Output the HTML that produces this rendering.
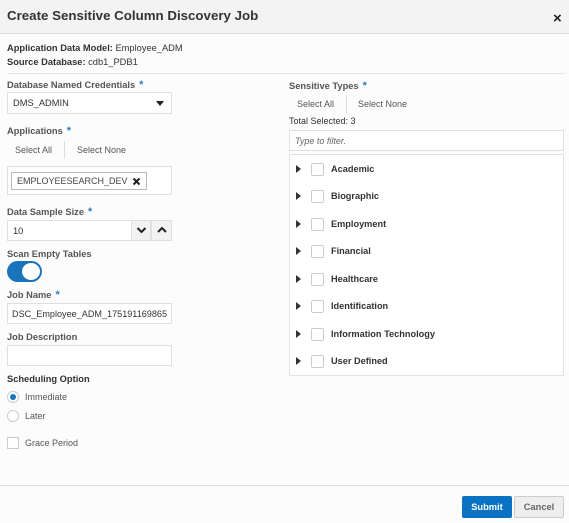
<!DOCTYPE html>
<html><head><style>
*{box-sizing:border-box;margin:0;padding:0}
body{width:569px;height:523px;background:#fcfcfc;font-family:"Liberation Sans",sans-serif;font-size:9.3px;color:#333;position:relative;overflow:hidden}
.a{position:absolute}
.lbl{position:absolute;font-size:9.3px;font-weight:bold;color:#555;line-height:12px}
.st{color:#2d7fc1;font-weight:bold;margin-left:4px;vertical-align:top;font-size:11px}
.inp{position:absolute;background:#fff;border:1px solid #dfdfdf;font-size:9.3px;color:#333;padding-left:5px;display:flex;align-items:center;white-space:nowrap;overflow:hidden}
.t{position:absolute;font-size:9px;color:#555;line-height:12px}
.row{position:absolute;left:296px;height:14px;display:flex;align-items:center}
.tri{width:0;height:0;border-left:5px solid #333;border-top:4px solid transparent;border-bottom:4px solid transparent;margin-right:10px}
.cb{width:13px;height:13px;border:1px solid #ccc;border-radius:2px;background:#fff;margin-right:7px}
.row span{font-weight:bold;font-size:9.2px;color:#333}
</style></head><body>
<div class="a" style="left:0;top:0;width:569px;height:34px;background:#f3f3f3;border-bottom:1px solid #e0e0e0"></div>
<div class="a" style="left:7px;top:8px;font-size:13.3px;font-weight:bold;color:#333">Create Sensitive Column Discovery Job</div>
<div class="a" style="left:553px;top:10px;font-size:15px;font-weight:bold;color:#222">×</div>

<div class="t" style="left:7px;top:42px;color:#333;font-size:9.3px"><b>Application Data Model:</b> Employee_ADM</div>
<div class="t" style="left:7px;top:56px;color:#333;font-size:9.3px"><b>Source Database:</b> cdb1_PDB1</div>
<div class="a" style="left:7px;top:73px;width:558px;height:1px;background:#e5e5e5"></div>

<div class="lbl" style="left:7px;top:79px">Database Named Credentials<span class="st">*</span></div>
<div class="inp" style="left:7px;top:92px;width:165px;height:22px">DMS_ADMIN</div>
<div class="a" style="left:156px;top:101px;border-top:5px solid #222;border-left:4px solid transparent;border-right:4px solid transparent"></div>

<div class="lbl" style="left:7px;top:125px">Applications<span class="st">*</span></div>
<div class="t" style="left:15px;top:144px">Select All</div>
<div class="a" style="left:64px;top:141px;width:1px;height:18px;background:#ddd"></div>
<div class="t" style="left:77px;top:144px">Select None</div>
<div class="inp" style="left:7px;top:166px;width:165px;height:29px;padding-left:0"></div>
<div class="inp" style="left:11px;top:172px;width:136px;height:18px;border-color:#bbb;color:#444;font-size:9px">EMPLOYEESEARCH_DEV</div>
<svg class="a" style="left:132px;top:177px" width="9" height="9"><path d="M1.5 1.5l6 6M7.5 1.5l-6 6" stroke="#222" stroke-width="2"/></svg>

<div class="lbl" style="left:7px;top:206px">Data Sample Size<span class="st">*</span></div>
<div class="inp" style="left:7px;top:220px;width:165px;height:21px">10</div>
<div class="a" style="left:131px;top:220px;width:20px;height:21px;border:1px solid #dfdfdf;background:#f2f2f2"></div>
<div class="a" style="left:151px;top:220px;width:21px;height:21px;border:1px solid #dfdfdf;background:#f2f2f2"></div>
<svg class="a" style="left:136px;top:225px" width="40" height="10"><path d="M1.5 3l4 4 4-4" stroke="#222" stroke-width="2" fill="none"/><path d="M22 7l4-4 4 4" stroke="#222" stroke-width="2" fill="none"/></svg>

<div class="lbl" style="left:7px;top:248px">Scan Empty Tables</div>
<div class="a" style="left:7px;top:261px;width:35px;height:21px;border-radius:11px;background:#1a74bc"></div>
<div class="a" style="left:22px;top:263px;width:18px;height:17px;border-radius:50%;background:#fff"></div>

<div class="lbl" style="left:7px;top:289px">Job Name<span class="st">*</span></div>
<div class="inp" style="left:7px;top:303px;width:165px;height:21px;font-size:9.1px;padding-left:4px">DSC_Employee_ADM_175191169865</div>

<div class="lbl" style="left:7px;top:331px">Job Description</div>
<div class="inp" style="left:7px;top:345px;width:165px;height:21px"></div>

<div class="lbl" style="left:7px;top:373px;color:#333">Scheduling Option</div>
<div class="a" style="left:7px;top:391px;width:12px;height:12px;border-radius:50%;border:1px solid #ccc;background:#fff"></div>
<div class="a" style="left:10px;top:394px;width:6px;height:6px;border-radius:50%;background:#1a74bc"></div>
<div class="t" style="left:25px;top:391px">Immediate</div>
<div class="a" style="left:7px;top:410px;width:12px;height:12px;border-radius:50%;border:1px solid #ccc;background:#fff"></div>
<div class="t" style="left:25px;top:410px">Later</div>
<div class="a" style="left:7px;top:437px;width:12px;height:12px;border:1px solid #ccc;background:#fff"></div>
<div class="t" style="left:25px;top:437px">Grace Period</div>

<div class="lbl" style="left:289px;top:80px">Sensitive Types<span class="st">*</span></div>
<div class="t" style="left:297px;top:98px">Select All</div>
<div class="a" style="left:346px;top:95px;width:1px;height:18px;background:#ddd"></div>
<div class="t" style="left:358px;top:98px">Select None</div>
<div class="t" style="left:289px;top:115px;color:#333">Total Selected: 3</div>
<div class="inp" style="left:289px;top:130px;width:275px;height:21px;font-style:italic;color:#666;font-size:9px">Type to filter.</div>
<div class="a" style="left:289px;top:154px;width:275px;height:222px;border:1px solid #e2e2e2;background:#fff"></div>
<div class="row" style="top:162px"><div class="tri"></div><div class="cb"></div><span>Academic</span></div>
<div class="row" style="top:189px"><div class="tri"></div><div class="cb"></div><span>Biographic</span></div>
<div class="row" style="top:217px"><div class="tri"></div><div class="cb"></div><span>Employment</span></div>
<div class="row" style="top:244px"><div class="tri"></div><div class="cb"></div><span>Financial</span></div>
<div class="row" style="top:272px"><div class="tri"></div><div class="cb"></div><span>Healthcare</span></div>
<div class="row" style="top:299px"><div class="tri"></div><div class="cb"></div><span>Identification</span></div>
<div class="row" style="top:327px"><div class="tri"></div><div class="cb"></div><span>Information Technology</span></div>
<div class="row" style="top:354px"><div class="tri"></div><div class="cb"></div><span>User Defined</span></div>

<div class="a" style="left:0;top:485px;width:569px;height:1px;background:#dcdcdc"></div>
<div class="a" style="left:462px;top:496px;width:50px;height:22px;background:#0a72c2;border-radius:2px;color:#fff;font-weight:bold;font-size:9.3px;display:flex;align-items:center;justify-content:center">Submit</div>
<div class="a" style="left:514px;top:496px;width:50px;height:22px;background:#eee;border:1px solid #ccc;border-radius:2px;color:#666;font-weight:bold;font-size:9.3px;display:flex;align-items:center;justify-content:center">Cancel</div>
</body></html>
